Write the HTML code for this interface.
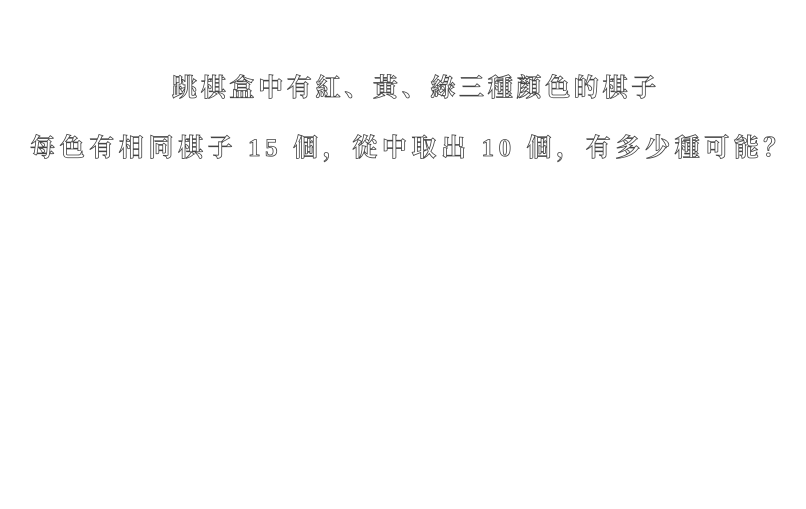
<!DOCTYPE html>
<html><head><meta charset="utf-8"><style>
html,body{margin:0;padding:0;background:#fff;width:806px;height:509px;overflow:hidden}
.t{position:absolute;white-space:nowrap;font-family:"Liberation Serif","Noto Serif CJK SC","Noto Sans CJK TC",serif;color:#fff;-webkit-text-stroke:0.8px #444;font-size:25px;line-height:30px;font-weight:bold}
</style></head><body>
<div class="t" style="left:172px;top:74px;letter-spacing:3.7px">跳棋盒中有紅、黃、綠三種顏色的棋子</div>
<div class="t" style="left:30px;top:134px;letter-spacing:4.6px">每色有相同棋子 15 個，從中取出 10 個，有多少種可能？</div>
</body></html>
